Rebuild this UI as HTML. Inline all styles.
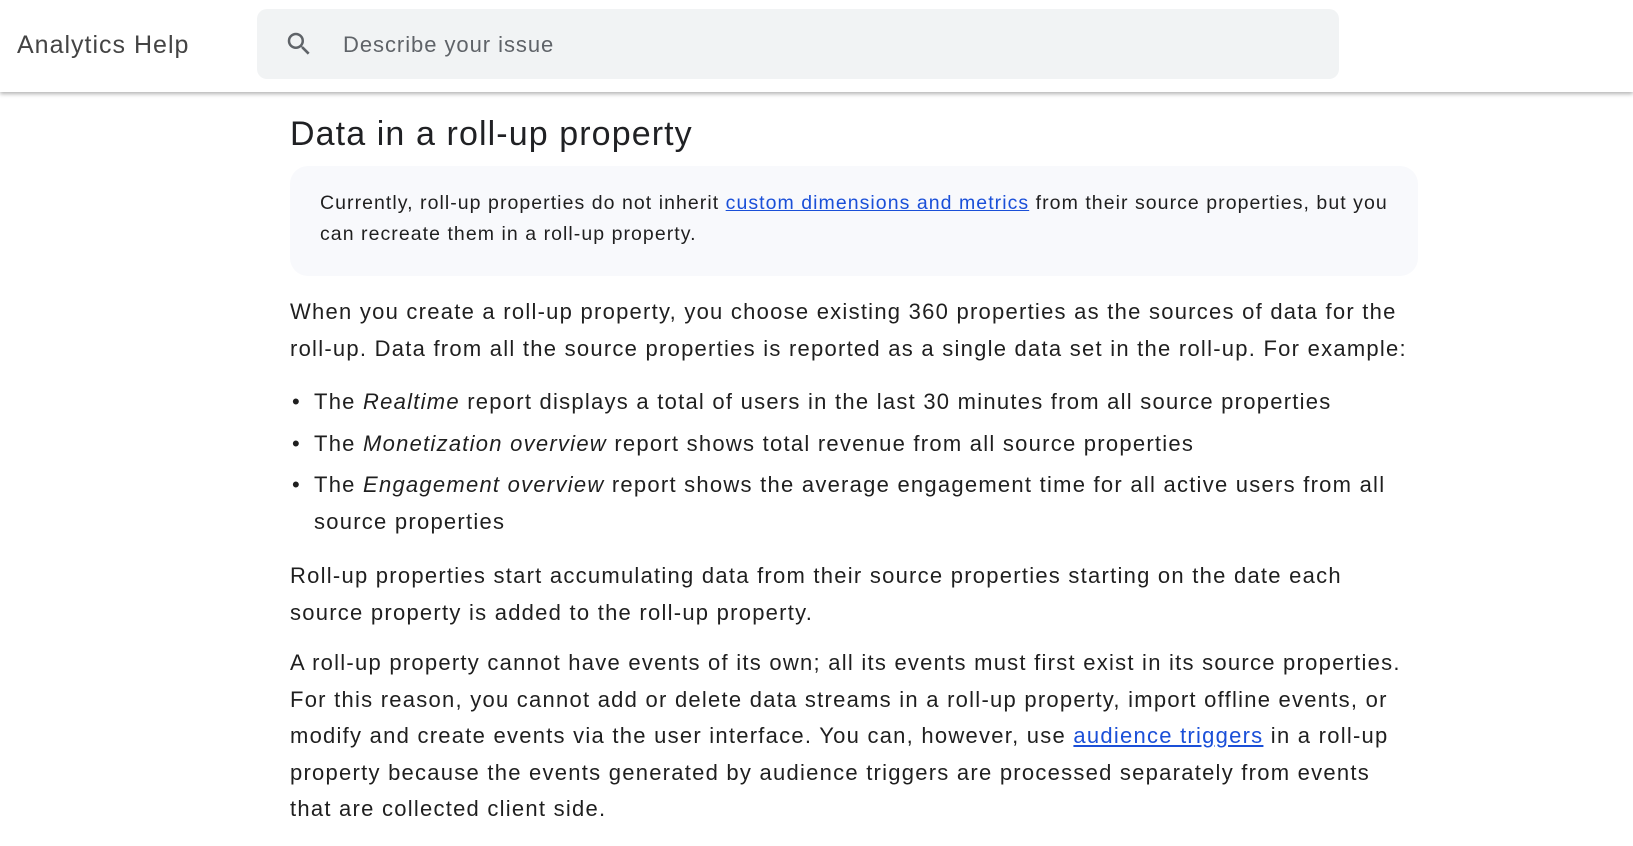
<!DOCTYPE html>
<html><head><meta charset="utf-8"><style>
*{margin:0;padding:0;box-sizing:border-box}
body{width:1633px;height:846px;overflow:hidden;background:#fff;font-family:"Liberation Sans",Arial,sans-serif;color:#1f1f1f}
.hdr{position:absolute;left:0;top:0;width:1633px;height:92px;background:#fff;box-shadow:0 2px 4px rgba(0,0,0,.3)}
.logo{position:absolute;left:17px;top:31px;font-size:25px;letter-spacing:1px;color:#444}
.search{position:absolute;left:257px;top:9px;width:1082px;height:70px;background:#f1f3f4;border-radius:10px}
.search svg{position:absolute;left:27px;top:20px}
.search span{position:absolute;left:86px;top:23px;font-size:22px;letter-spacing:0.95px;color:#5f6368}
h1{position:absolute;left:290px;top:115px;font-size:34px;letter-spacing:1.1px;font-weight:400;color:#202124}
.call{position:absolute;left:290px;top:166px;width:1128px;height:110px;background:#f8f9fc;border-radius:18px;padding:22px 30px;font-size:19.5px;letter-spacing:1.05px;line-height:31px;white-space:nowrap}
a{color:#1a4fd8;text-decoration:underline}
.t{position:absolute;left:290px;font-size:22px;letter-spacing:1.25px;line-height:36.5px;white-space:nowrap;color:#1f1f1f}
.li{position:absolute;left:290px;font-size:22px;letter-spacing:1.25px;line-height:36.5px;white-space:nowrap}
.li b{position:absolute;left:2px;font-weight:400}
.li div{padding-left:24px}
</style></head><body>
<div class="hdr"><div class="logo">Analytics Help</div>
<div class="search"><svg width="30" height="30" viewBox="0 0 24 24"><path d="M15.5 14h-.79l-.28-.27A6.47 6.47 0 0 0 16 9.5 6.5 6.5 0 1 0 9.5 16c1.61 0 3.09-.59 4.23-1.57l.27.28v.79l5 4.99L20.49 19l-4.99-5zm-6 0C7.01 14 5 11.990 5 9.5S7.01 5 9.5 5 14 7.01 14 9.5 11.99 14 9.5 14z" fill="#5f6368"/></svg><span>Describe your issue</span></div></div>
<h1>Data in a roll-up property</h1>
<div class="call">Currently, roll-up properties do not inherit <a>custom dimensions and metrics</a> from their source properties, but you<br>can recreate them in a roll-up property.</div>
<div class="t" style="top:294px">When you create a roll-up property, you choose existing 360 properties as the sources of data for the<br>roll-up. Data from all the source properties is reported as a single data set in the roll-up. For example:</div>
<div class="li" style="top:384px"><b>•</b><div>The <i>Realtime</i> report displays a total of users in the last 30 minutes from all source properties</div></div>
<div class="li" style="top:426px"><b>•</b><div>The <i>Monetization overview</i> report shows total revenue from all source properties</div></div>
<div class="li" style="top:467px"><b>•</b><div>The <i>Engagement overview</i> report shows the average engagement time for all active users from all<br>source properties</div></div>
<div class="t" style="top:558px">Roll-up properties start accumulating data from their source properties starting on the date each<br>source property is added to the roll-up property.</div>
<div class="t" style="top:645px">A roll-up property cannot have events of its own; all its events must first exist in its source properties.<br>For this reason, you cannot add or delete data streams in a roll-up property, import offline events, or<br>modify and create events via the user interface. You can, however, use <a>audience triggers</a> in a roll-up<br>property because the events generated by audience triggers are processed separately from events<br>that are collected client side.</div>
</body></html>
